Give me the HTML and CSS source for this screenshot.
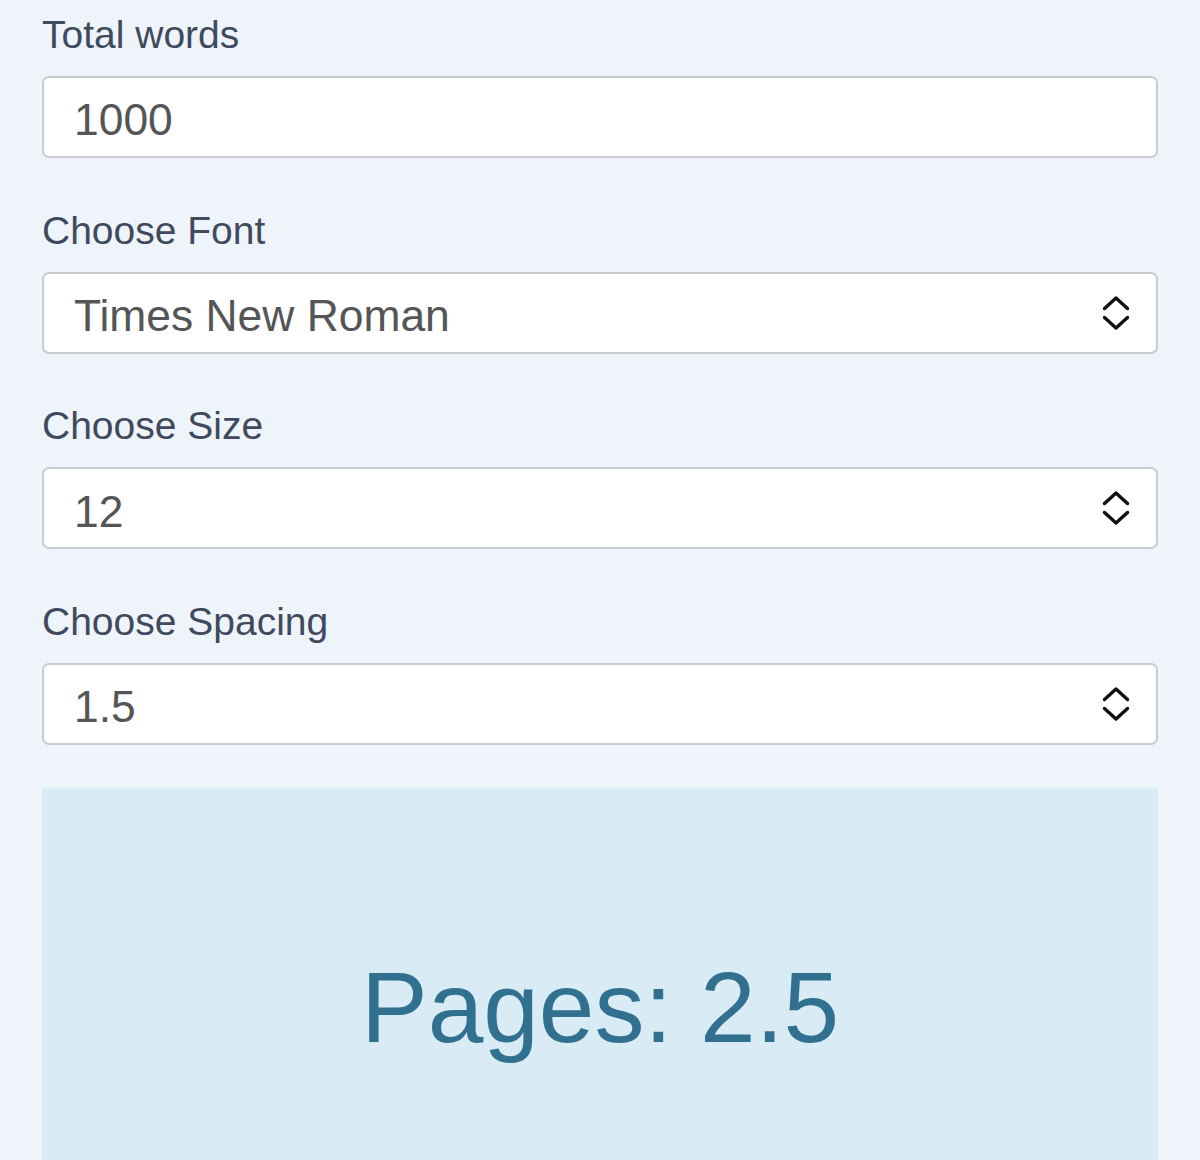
FILE: index.html
```html
<!DOCTYPE html>
<html>
<head>
<meta charset="utf-8">
<link rel="stylesheet" href="styles.css">
</head>
<body>
<main class="calc">
  <div class="group">
    <label class="label" for="words">Total words</label>
    <input class="control" id="words" type="text" value="1000">
  </div>
  <div class="group">
    <label class="label" for="font">Choose Font</label>
    <div class="select-wrap">
      <select class="control" id="font"><option>Times New Roman</option></select>
      <svg class="chev" width="28" height="36" viewBox="0 0 28 36"><path d="M2.5 13.5 L14 3 L25.5 13.5 M2.5 22.5 L14 33 L25.5 22.5" fill="none" stroke="#111" stroke-width="3.4" stroke-linecap="round" stroke-linejoin="round"/></svg>
    </div>
  </div>
  <div class="group">
    <label class="label" for="size">Choose Size</label>
    <div class="select-wrap">
      <select class="control" id="size"><option>12</option></select>
      <svg class="chev" width="28" height="36" viewBox="0 0 28 36"><path d="M2.5 13.5 L14 3 L25.5 13.5 M2.5 22.5 L14 33 L25.5 22.5" fill="none" stroke="#111" stroke-width="3.4" stroke-linecap="round" stroke-linejoin="round"/></svg>
    </div>
  </div>
  <div class="group">
    <label class="label" for="spacing">Choose Spacing</label>
    <div class="select-wrap">
      <select class="control" id="spacing"><option>1.5</option></select>
      <svg class="chev" width="28" height="36" viewBox="0 0 28 36"><path d="M2.5 13.5 L14 3 L25.5 13.5 M2.5 22.5 L14 33 L25.5 22.5" fill="none" stroke="#111" stroke-width="3.4" stroke-linecap="round" stroke-linejoin="round"/></svg>
    </div>
  </div>
  <div class="result">Pages: 2.5</div>
</main>
</body>
</html>
```

FILE: styles.css
```css
html, body {
  margin: 0;
  padding: 0;
  background: #eff4fb;
  height: 100%;
  overflow: hidden;
}
body {
  font-family: "Liberation Sans", Arial, sans-serif;
}
.calc {
  padding: 12px 42px 0 42px;
  display: flex;
  flex-direction: column;
}
.group {
  display: flex;
  flex-direction: column;
  margin-bottom: 49.5px;
}
.group:nth-child(4) {
  margin-bottom: 42px;
}
.label {
  display: block;
  font-size: 39px;
  line-height: 46px;
  height: 46px;
  color: #3f4a5f;
  margin-bottom: 18px;
}
.select-wrap {
  position: relative;
}
.control {
  display: block;
  box-sizing: border-box;
  width: 100%;
  height: 82px;
  margin: 0;
  padding: 6px 30px 0 30px;
  border: 2px solid #c9cbce;
  border-radius: 7px;
  background: #fff;
  font-family: "Liberation Sans", Arial, sans-serif;
  font-size: 44.4px;
  color: #555;
  -webkit-appearance: none;
  appearance: none;
  outline: none;
}
.chev {
  position: absolute;
  right: 28px;
  top: 23px;
  pointer-events: none;
}
.result {
  background: #d9ecf6;
  border-top: 2px solid #e3f1f8;
  color: #31708f;
  font-size: 100px;
  line-height: 115px;
  text-align: center;
  padding-top: 161px;
  height: 373px;
  box-sizing: border-box;
}
```
